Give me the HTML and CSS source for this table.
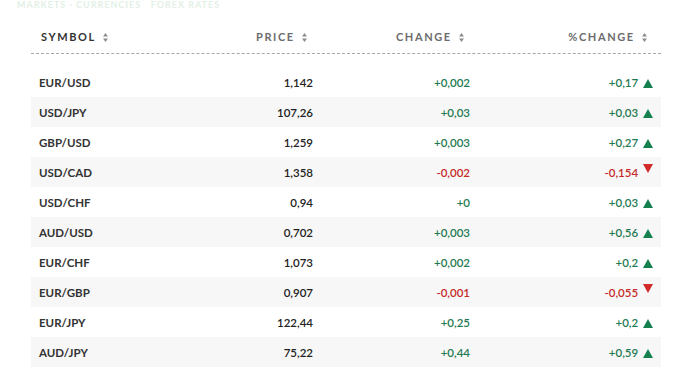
FILE: index.html
```html
<!DOCTYPE html>
<html>
<head>
    <title>Currencies</title>
    <link rel="stylesheet" href="styles.css">
</head>
<body>
    <div class="title">MARKETS &middot; CURRENCIES &nbsp; FOREX RATES</div>

    <div class="quotes">
        <div class="quotes-head">
            <div class="cell cell-symbol">SYMBOL <svg class="sort" width="5" height="9" viewBox="0 0 5 9"><path d="M2.5 0L5 3.5H0z M2.5 9L0 5.5H5z"/></svg></div>
            <div class="cell cell-num">PRICE <svg class="sort" width="5" height="9" viewBox="0 0 5 9"><path d="M2.5 0L5 3.5H0z M2.5 9L0 5.5H5z"/></svg></div>
            <div class="cell cell-num">CHANGE <svg class="sort" width="5" height="9" viewBox="0 0 5 9"><path d="M2.5 0L5 3.5H0z M2.5 9L0 5.5H5z"/></svg></div>
            <div class="cell cell-num cell-pct">%CHANGE <svg class="sort" width="5" height="9" viewBox="0 0 5 9"><path d="M2.5 0L5 3.5H0z M2.5 9L0 5.5H5z"/></svg></div>
        </div>

        <div id="quotesBody" class="quotes-body">
            <div class="row">
                <div class="cell cell-symbol">EUR/USD</div>
                <div class="cell cell-num price">1,142</div>
                <div class="cell cell-num up">+0,002</div>
                <div class="cell cell-num cell-pct up">+0,17 <span class="trend trend-up"></span></div>
            </div>
            <div class="row">
                <div class="cell cell-symbol">USD/JPY</div>
                <div class="cell cell-num price">107,26</div>
                <div class="cell cell-num up">+0,03</div>
                <div class="cell cell-num cell-pct up">+0,03 <span class="trend trend-up"></span></div>
            </div>
            <div class="row">
                <div class="cell cell-symbol">GBP/USD</div>
                <div class="cell cell-num price">1,259</div>
                <div class="cell cell-num up">+0,003</div>
                <div class="cell cell-num cell-pct up">+0,27 <span class="trend trend-up"></span></div>
            </div>
            <div class="row">
                <div class="cell cell-symbol">USD/CAD</div>
                <div class="cell cell-num price">1,358</div>
                <div class="cell cell-num down">-0,002</div>
                <div class="cell cell-num cell-pct down">-0,154 <span class="trend trend-down"></span></div>
            </div>
            <div class="row">
                <div class="cell cell-symbol">USD/CHF</div>
                <div class="cell cell-num price">0,94</div>
                <div class="cell cell-num up">+0</div>
                <div class="cell cell-num cell-pct up">+0,03 <span class="trend trend-up"></span></div>
            </div>
            <div class="row">
                <div class="cell cell-symbol">AUD/USD</div>
                <div class="cell cell-num price">0,702</div>
                <div class="cell cell-num up">+0,003</div>
                <div class="cell cell-num cell-pct up">+0,56 <span class="trend trend-up"></span></div>
            </div>
            <div class="row">
                <div class="cell cell-symbol">EUR/CHF</div>
                <div class="cell cell-num price">1,073</div>
                <div class="cell cell-num up">+0,002</div>
                <div class="cell cell-num cell-pct up">+0,2 <span class="trend trend-up"></span></div>
            </div>
            <div class="row">
                <div class="cell cell-symbol">EUR/GBP</div>
                <div class="cell cell-num price">0,907</div>
                <div class="cell cell-num down">-0,001</div>
                <div class="cell cell-num cell-pct down">-0,055 <span class="trend trend-down"></span></div>
            </div>
            <div class="row">
                <div class="cell cell-symbol">EUR/JPY</div>
                <div class="cell cell-num price">122,44</div>
                <div class="cell cell-num up">+0,25</div>
                <div class="cell cell-num cell-pct up">+0,2 <span class="trend trend-up"></span></div>
            </div>
            <div class="row">
                <div class="cell cell-symbol">AUD/JPY</div>
                <div class="cell cell-num price">75,22</div>
                <div class="cell cell-num up">+0,44</div>
                <div class="cell cell-num cell-pct up">+0,59 <span class="trend trend-up"></span></div>
            </div>
        </div>
    </div>
</body>
</html>
```

FILE: styles.css
```css
body {
    font-family: 'Lato', 'Liberation Sans', sans-serif;
    margin: 0;
    padding: 0;
    background-color: white;
    color: #333;
}
.title {
    margin: 0 0 0 17px;
    font-size: 9px;
    line-height: 9px;
    font-weight: bold;
    letter-spacing: 1px;
    color: #e3f0e6;
}
.quotes {
    width: 630px;
    margin: 20px 0 0 31px;
}
.quotes-head,
.row {
    display: grid;
    grid-template-columns: 140px 142px 157px 191px;
}
.quotes-head {
    border-bottom: 1px dashed #a8a8a8;
    padding-bottom: 8px;
    font-size: 11px;
    line-height: 16px;
    font-weight: bold;
    letter-spacing: 1.6px;
    color: #6c6c6c;
}
.quotes-head .cell-symbol {
    padding-left: 10px;
}
.quotes-head .cell-num {
    padding-right: 6px;
}
.quotes-head .cell-pct {
    padding-right: 14px;
}
.sort {
    fill: #8d8d8d;
    margin-left: 3px;
    vertical-align: -1px;
}
.quotes-body {
    margin-top: 13px;
}
.row {
    height: 30px;
    font-size: 11.5px;
}
.row .cell {
    padding-top: 2px;
    line-height: 28px;
}
.row:nth-child(even) {
    background-color: #f7f7f7;
}
.cell-symbol {
    padding-left: 8px;
    font-weight: bold;
    color: #333;
}
.cell-num {
    text-align: right;
}
.cell-pct {
    padding-right: 8px;
}
.price {
    color: #222;
    font-weight: 600;
}
.up {
    color: #1f7a52;
    font-weight: 600;
}
.down {
    color: #c42b2b;
    font-weight: 600;
}
.trend {
    display: inline-block;
    width: 0;
    height: 0;
    margin-left: 2px;
    border-left: 5.5px solid transparent;
    border-right: 5.5px solid transparent;
}
.trend-up {
    border-bottom: 9px solid #16804f;
    vertical-align: -1px;
}
.trend-down {
    border-top: 9px solid #d02a2a;
    vertical-align: 4px;
}
```
